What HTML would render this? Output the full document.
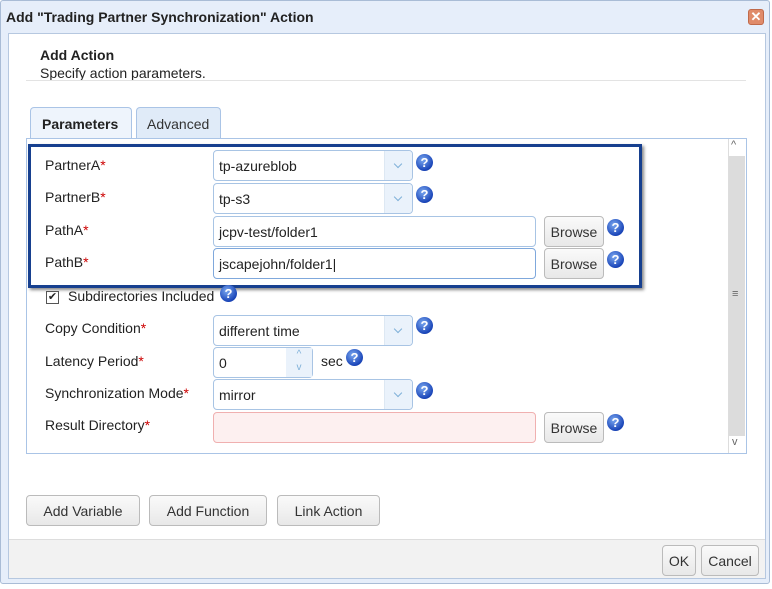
<!DOCTYPE html>
<html><head><style>
*{box-sizing:border-box}
body{margin:0;width:772px;height:589px;background:#fff;font-family:"Liberation Sans",Arial,sans-serif;font-size:14px;color:#222;position:relative;overflow:hidden}
.a{position:absolute}
.dlg{left:0;top:0;width:770px;height:584px;background:#e6eefa;border:1px solid #a9bcd6;border-radius:3px}
.inner{left:8px;top:33px;width:758px;height:546px;background:#fff;border:1px solid #b6c8e0}
.foot{left:9px;top:539px;width:756px;height:39px;background:#f2f2f2;border-top:1px solid #ddd}
.lbl{font-size:14px;color:#222}
.r{color:#c00}
.sel{height:31px;border:1px solid #a8c4e4;border-radius:4px;background:#fff;padding:7px 0 0 5px;font-size:14px}
.sel .dd{position:absolute;right:0;top:0;width:28px;height:29px;background:#eaf2fb;border-left:1px solid #dde8f3;border-radius:0 4px 4px 0}
.sel .dd:after{content:"";position:absolute;left:10px;top:10px;width:5px;height:5px;border-right:1.5px solid #7fb0d8;border-bottom:1.5px solid #7fb0d8;transform:rotate(45deg)}
.btn{height:31px;border:1px solid #bbb;border-radius:4px;background:linear-gradient(#fafafa,#e8e8e8);font-size:14px;color:#333;text-align:center;padding-top:7px}
.q{width:17px;height:17px;border-radius:50%;background:radial-gradient(circle at 40% 35%,#7aa8f0,#1a45b8 70%,#0d2e8a);color:#fff;font-weight:bold;font-size:13px;text-align:center;line-height:17px}
</style></head><body>
<div class="a dlg"></div>
<div class="a" style="left:6px;top:9px;font-weight:bold;font-size:14px;color:#222">Add "Trading Partner Synchronization" Action</div>
<div class="a" style="left:748px;top:9px;width:16px;height:16px;background:#e08b6a;border:1px solid #c06a4a;border-radius:3px;color:#fff;font-size:13px;font-weight:bold;text-align:center;line-height:14px">✕</div>
<div class="a inner"></div>
<div class="a" style="left:40px;top:47px;font-weight:bold">Add Action</div>
<div class="a" style="left:40px;top:65px">Specify action parameters.</div>
<div class="a" style="left:26px;top:80px;width:720px;height:1px;background:#e3e3e3"></div>
<div class="a" style="left:30px;top:107px;width:102px;height:32px;background:#eef4fc;border:1px solid #aac4e6;border-bottom:none;border-radius:4px 4px 0 0;font-weight:bold;padding:8px 0 0 11px">Parameters</div>
<div class="a" style="left:136px;top:107px;width:85px;height:31px;background:#e0ebf8;border:1px solid #aac4e6;border-bottom:none;border-radius:4px 4px 0 0;padding:8px 0 0 10px;color:#333">Advanced</div>
<div class="a" style="left:26px;top:138px;width:721px;height:316px;border:1px solid #aac4e6;background:#fff"></div>
<div class="a" style="left:728px;top:139px;width:18px;height:314px;background:#fff;border-left:1px solid #ddd"></div>
<div class="a" style="left:729px;top:156px;width:16px;height:280px;background:#dcdcdc"></div>
<div class="a" style="left:731px;top:139px;font-size:11px;color:#666">^</div>
<div class="a" style="left:732px;top:436px;font-size:11px;color:#666">v</div>
<div class="a" style="left:732px;top:288px;font-size:11px;color:#666">≡</div>
<div class="a" style="left:28px;top:144px;width:614px;height:144px;border:3px solid #17408f;box-shadow:2px 2px 3px #888"></div>

<div class="a lbl" style="left:45px;top:157px">PartnerA<span class="r">*</span></div>
<div class="a sel" style="left:213px;top:150px;width:200px">tp-azureblob<div class="dd"></div></div>
<div class="a q" style="left:416px;top:154px">?</div>
<div class="a lbl" style="left:45px;top:189px">PartnerB<span class="r">*</span></div>
<div class="a sel" style="left:213px;top:183px;width:200px">tp-s3<div class="dd"></div></div>
<div class="a q" style="left:416px;top:186px">?</div>
<div class="a lbl" style="left:45px;top:222px">PathA<span class="r">*</span></div>
<div class="a sel" style="left:213px;top:216px;width:323px">jcpv-test/folder1</div>
<div class="a btn" style="left:544px;top:216px;width:60px">Browse</div>
<div class="a q" style="left:607px;top:219px">?</div>
<div class="a lbl" style="left:45px;top:254px">PathB<span class="r">*</span></div>
<div class="a sel" style="left:213px;top:248px;width:323px;border-color:#7fa8dc">jscapejohn/folder1|</div>
<div class="a btn" style="left:544px;top:248px;width:60px">Browse</div>
<div class="a q" style="left:607px;top:251px">?</div>

<div class="a" style="left:46px;top:291px;width:13px;height:13px;border:1px solid #555;font-size:11px;line-height:11px;text-align:center">✔</div>
<div class="a lbl" style="left:68px;top:288px">Subdirectories Included</div>
<div class="a q" style="left:220px;top:285px">?</div>
<div class="a lbl" style="left:45px;top:320px">Copy Condition<span class="r">*</span></div>
<div class="a sel" style="left:213px;top:315px;width:200px">different time<div class="dd"></div></div>
<div class="a q" style="left:416px;top:317px">?</div>
<div class="a lbl" style="left:45px;top:353px">Latency Period<span class="r">*</span></div>
<div class="a sel" style="left:213px;top:347px;width:100px">0<div class="a" style="right:0;top:0;width:26px;height:29px;background:#eaf2fb;color:#7fb0d8;font-size:10px;text-align:center;line-height:13px">^<br>v</div></div>
<div class="a lbl" style="left:321px;top:353px">sec</div>
<div class="a q" style="left:346px;top:349px">?</div>
<div class="a lbl" style="left:45px;top:385px">Synchronization Mode<span class="r">*</span></div>
<div class="a sel" style="left:213px;top:379px;width:200px">mirror<div class="dd"></div></div>
<div class="a q" style="left:416px;top:382px">?</div>
<div class="a lbl" style="left:45px;top:417px">Result Directory<span class="r">*</span></div>
<div class="a sel" style="left:213px;top:412px;width:323px;border-color:#f0b0b0;background:#fdf0f0"></div>
<div class="a btn" style="left:544px;top:412px;width:60px">Browse</div>
<div class="a q" style="left:607px;top:414px">?</div>

<div class="a btn" style="left:26px;top:495px;width:114px">Add Variable</div>
<div class="a btn" style="left:149px;top:495px;width:118px">Add Function</div>
<div class="a btn" style="left:277px;top:495px;width:103px">Link Action</div>
<div class="a foot"></div>
<div class="a btn" style="left:662px;top:545px;width:34px;padding-top:7px">OK</div>
<div class="a btn" style="left:701px;top:545px;width:58px">Cancel</div>
</body></html>
